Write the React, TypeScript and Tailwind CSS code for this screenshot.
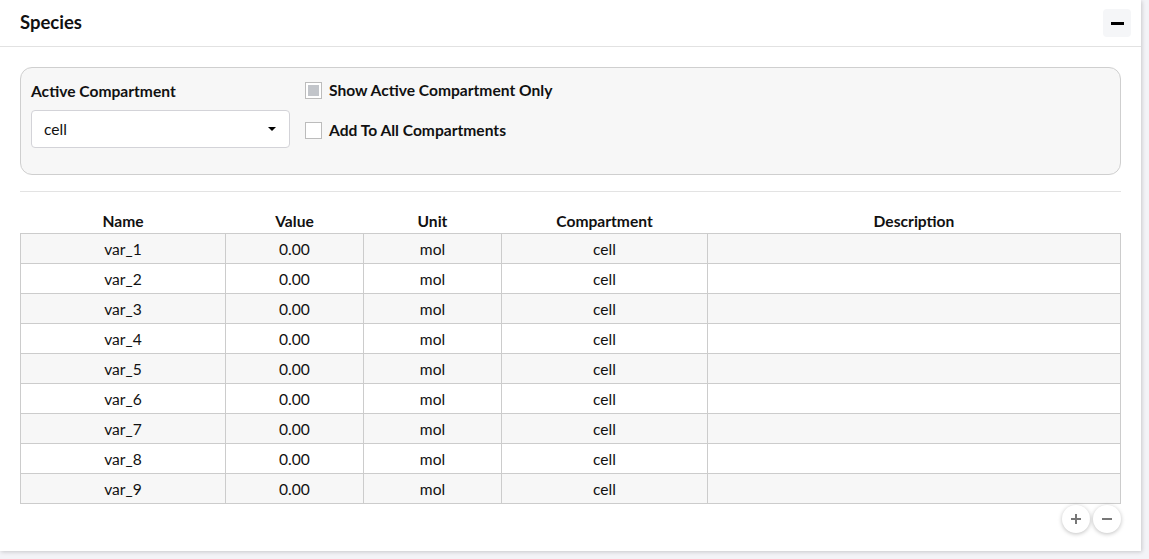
import React from 'react';

const rows = Array.from({ length: 9 }, (_, i) => ({
  name: `var_${i + 1}`,
  value: '0.00',
  unit: 'mol',
  compartment: 'cell',
  description: '',
}));

export default function App() {
  return (
    <div
      className="w-[1149px] h-[559px] bg-[#f3f3f7] overflow-hidden text-[#111]"
      style={{ fontFamily: 'Lato, "Open Sans", sans-serif' }}
    >
      <div className="w-[1141px] h-[551px] bg-white shadow-[1px_1px_4px_rgba(0,0,0,0.18)] flex flex-col">
        {/* Заголовок */}
        <div className="h-[47px] shrink-0 border-b border-[#e2e2e2] flex items-center justify-between pl-5 pr-[10px]">
          <span className="text-[18.5px] font-bold">Species</span>
          <button className="w-7 h-7 rounded bg-[#f5f6f8] flex items-center justify-center">
            <span className="block w-[13px] h-[3px] bg-black"></span>
          </button>
        </div>

        <div className="px-5 pt-5">
          {/* Панель настроек */}
          <div className="h-[108px] rounded-xl border border-[#cfcfcf] bg-[#f7f7f7] flex gap-[15px] px-[10px] pt-[12px]">
            <div className="w-[259px] flex flex-col">
              <label className="text-[15.6px] font-bold leading-[20px] pt-[1px]">Active Compartment</label>
              <div className="mt-[9px] h-[38px] bg-white border border-[#d3d3d8] rounded flex items-center justify-between pl-[12px] pr-[13px]">
                <span className="text-[15.6px] pt-[2px]">cell</span>
                <span className="w-0 h-0 border-l-[4px] border-r-[4px] border-t-[4px] border-l-transparent border-r-transparent border-t-black"></span>
              </div>
            </div>
            <div className="flex flex-col gap-[20px]">
              <label className="flex items-center gap-[7px] h-[20px]">
                <span className="w-[17px] h-[17px] border border-[#bcbcbc] bg-white flex items-center justify-center">
                  <span className="block w-[11px] h-[11px] bg-[#c2c5ca]"></span>
                </span>
                <span className="text-[15.6px] font-bold pt-[2px]">Show Active Compartment Only</span>
              </label>
              <label className="flex items-center gap-[7px] h-[20px]">
                <span className="w-[17px] h-[17px] border border-[#bcbcbc] bg-white"></span>
                <span className="text-[15.6px] font-bold pt-[2px]">Add To All Compartments</span>
              </label>
            </div>
          </div>

          <div className="mt-4 border-t border-[#e3e3e3]"></div>

          {/* Таблица */}
          <table className="mt-[18px] w-full border-collapse text-[15.6px] table-fixed">
            <thead>
              <tr className="h-[23px] leading-[23px]">
                <th className="w-[205px] font-bold text-center">Name</th>
                <th className="w-[138px] font-bold text-center">Value</th>
                <th className="w-[138px] font-bold text-center">Unit</th>
                <th className="w-[206px] font-bold text-center">Compartment</th>
                <th className="font-bold text-center">Description</th>
              </tr>
            </thead>
            <tbody>
              {rows.map((r, i) => (
                <tr key={r.name} className={i % 2 === 0 ? 'h-[30px] bg-[#f7f7f7]' : 'h-[30px] bg-white'}>
                  <td className="border border-[#cccccc] text-center pt-[2px]">{r.name}</td>
                  <td className="border border-[#cccccc] text-center pt-[2px]">{r.value}</td>
                  <td className="border border-[#cccccc] text-center pt-[2px]">{r.unit}</td>
                  <td className="border border-[#cccccc] text-center pt-[2px]">{r.compartment}</td>
                  <td className="border border-[#cccccc] text-center pt-[2px]">{r.description}</td>
                </tr>
              ))}
            </tbody>
          </table>

          <div className="flex justify-end gap-[3px] mt-[1px]">
            <button className="w-[28px] h-[28px] rounded-full bg-white shadow-[0_1px_4px_rgba(0,0,0,0.25)] flex items-center justify-center">
              <svg width="12" height="12" viewBox="0 0 12 12">
                <path d="M6 1v10M1 6h10" stroke="#777" strokeWidth="2" />
              </svg>
            </button>
            <button className="w-[28px] h-[28px] rounded-full bg-white shadow-[0_1px_4px_rgba(0,0,0,0.25)] flex items-center justify-center">
              <svg width="12" height="12" viewBox="0 0 12 12">
                <path d="M1 6h10" stroke="#777" strokeWidth="2" />
              </svg>
            </button>
          </div>
        </div>
      </div>
    </div>
  );
}
